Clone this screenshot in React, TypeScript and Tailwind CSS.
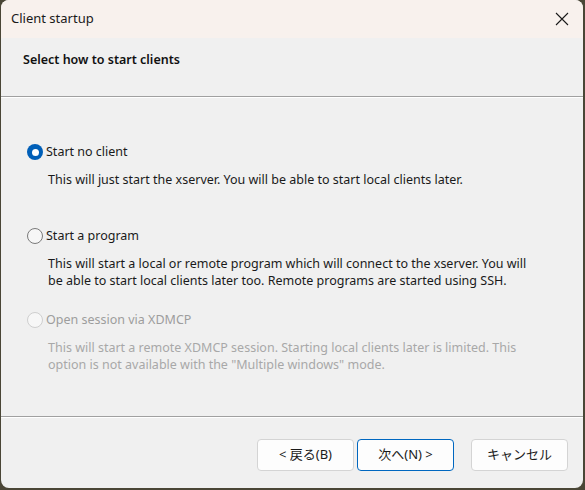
import React from 'react'

const font = { fontFamily: '"Noto Sans", "Noto Sans CJK JP", sans-serif' }

function Radio({ checked, disabled }: { checked?: boolean; disabled?: boolean }) {
  if (checked) {
    return (
      <span className="w-4 h-4 rounded-full bg-[#005fb8] flex items-center justify-center shrink-0">
        <span className="w-[7px] h-[7px] rounded-full bg-white" />
      </span>
    )
  }
  return (
    <span
      className={
        disabled
          ? 'w-4 h-4 rounded-full border border-[#cfcfcf] bg-[#f7f7f7] shrink-0'
          : 'w-4 h-4 rounded-full border border-[#7a7a7a] bg-[#f6f6f6] shrink-0'
      }
    />
  )
}

function Option({
  label,
  lines,
  checked,
  disabled,
}: {
  label: string
  lines: string[]
  checked?: boolean
  disabled?: boolean
}) {
  return (
    <div>
      <div className="flex items-center gap-[3px] h-4">
        <Radio checked={checked} disabled={disabled} />
        <span className={disabled ? 'text-[12.5px] text-[#9d9d9d]' : 'text-[12.5px] text-[#1a1a1a]'}>{label}</span>
      </div>
      <div className={disabled ? 'mt-[11px] pl-[21px] text-[12.5px] leading-[17px] text-[#a8a8a8]' : 'mt-[11px] pl-[21px] text-[12.5px] leading-[17px] text-[#1a1a1a]'}>
        {lines.map(l => (
          <div key={l} className="whitespace-nowrap">{l}</div>
        ))}
      </div>
    </div>
  )
}

export default function App() {
  return (
    <div className="w-[585px] h-[490px] bg-[#4a4636] pl-px pr-[2px] pb-[2px]" style={font}>
      <div className="w-full h-full bg-[#f0f0f0] rounded-lg overflow-hidden flex flex-col">
        {/* title bar */}
        <div className="h-[38px] bg-[#f8f1ed] flex items-center justify-between pl-[10px] pr-[14px] shrink-0">
          <span className="text-[13px] text-[#1a1a1a]">Client startup</span>
          <svg width="14" height="14" viewBox="0 0 14 14" stroke="#1a1a1a" strokeWidth="1.1" fill="none">
            <path d="M1 1L13 13M13 1L1 13" />
          </svg>
        </div>

        {/* header */}
        <div className="h-[58px] shrink-0 pl-[22px] pt-[8px]">
          <span className="text-[12.5px] font-semibold text-[#111]">Select how to start clients</span>
        </div>
        <div className="h-px bg-[#a0a0a0] shrink-0" />
        <div className="h-px bg-white shrink-0" />

        {/* body */}
        <div className="flex-1 pl-[26px] pt-[46px] flex flex-col">
          <Option
            checked
            label="Start no client"
            lines={['This will just start the xserver. You will be able to start local clients later.']}
          />
          <div className="mt-[40px]">
            <Option
              label="Start a program"
              lines={[
                'This will start a local or remote program which will connect to the xserver. You will',
                'be able to start local clients later too. Remote programs are started using SSH.',
              ]}
            />
          </div>
          <div className="mt-[23px]">
            <Option
              disabled
              label="Open session via XDMCP"
              lines={[
                'This will start a remote XDMCP session. Starting local clients later is limited. This',
                'option is not available with the "Multiple windows" mode.',
              ]}
            />
          </div>
        </div>

        <div className="h-px bg-[#a0a0a0] shrink-0" />
        <div className="h-px bg-white shrink-0" />

        {/* buttons */}
        <div className="h-[70px] shrink-0 flex items-start pt-[21px] pl-[256px] text-[13px] text-[#1a1a1a]">
          <button className="w-[97px] h-[32px] bg-[#fdfdfd] border border-[#d4d4d4] rounded-[4px]">&lt; 戻る(B)</button>
          <button className="ml-[3px] w-[97px] h-[32px] bg-[#fdfdfd] border border-[#0067c0] rounded-[4px]">次へ(N) &gt;</button>
          <button className="ml-[17px] w-[97px] h-[32px] bg-[#fdfdfd] border border-[#d4d4d4] rounded-[4px]">キャンセル</button>
        </div>
      </div>
    </div>
  )
}
